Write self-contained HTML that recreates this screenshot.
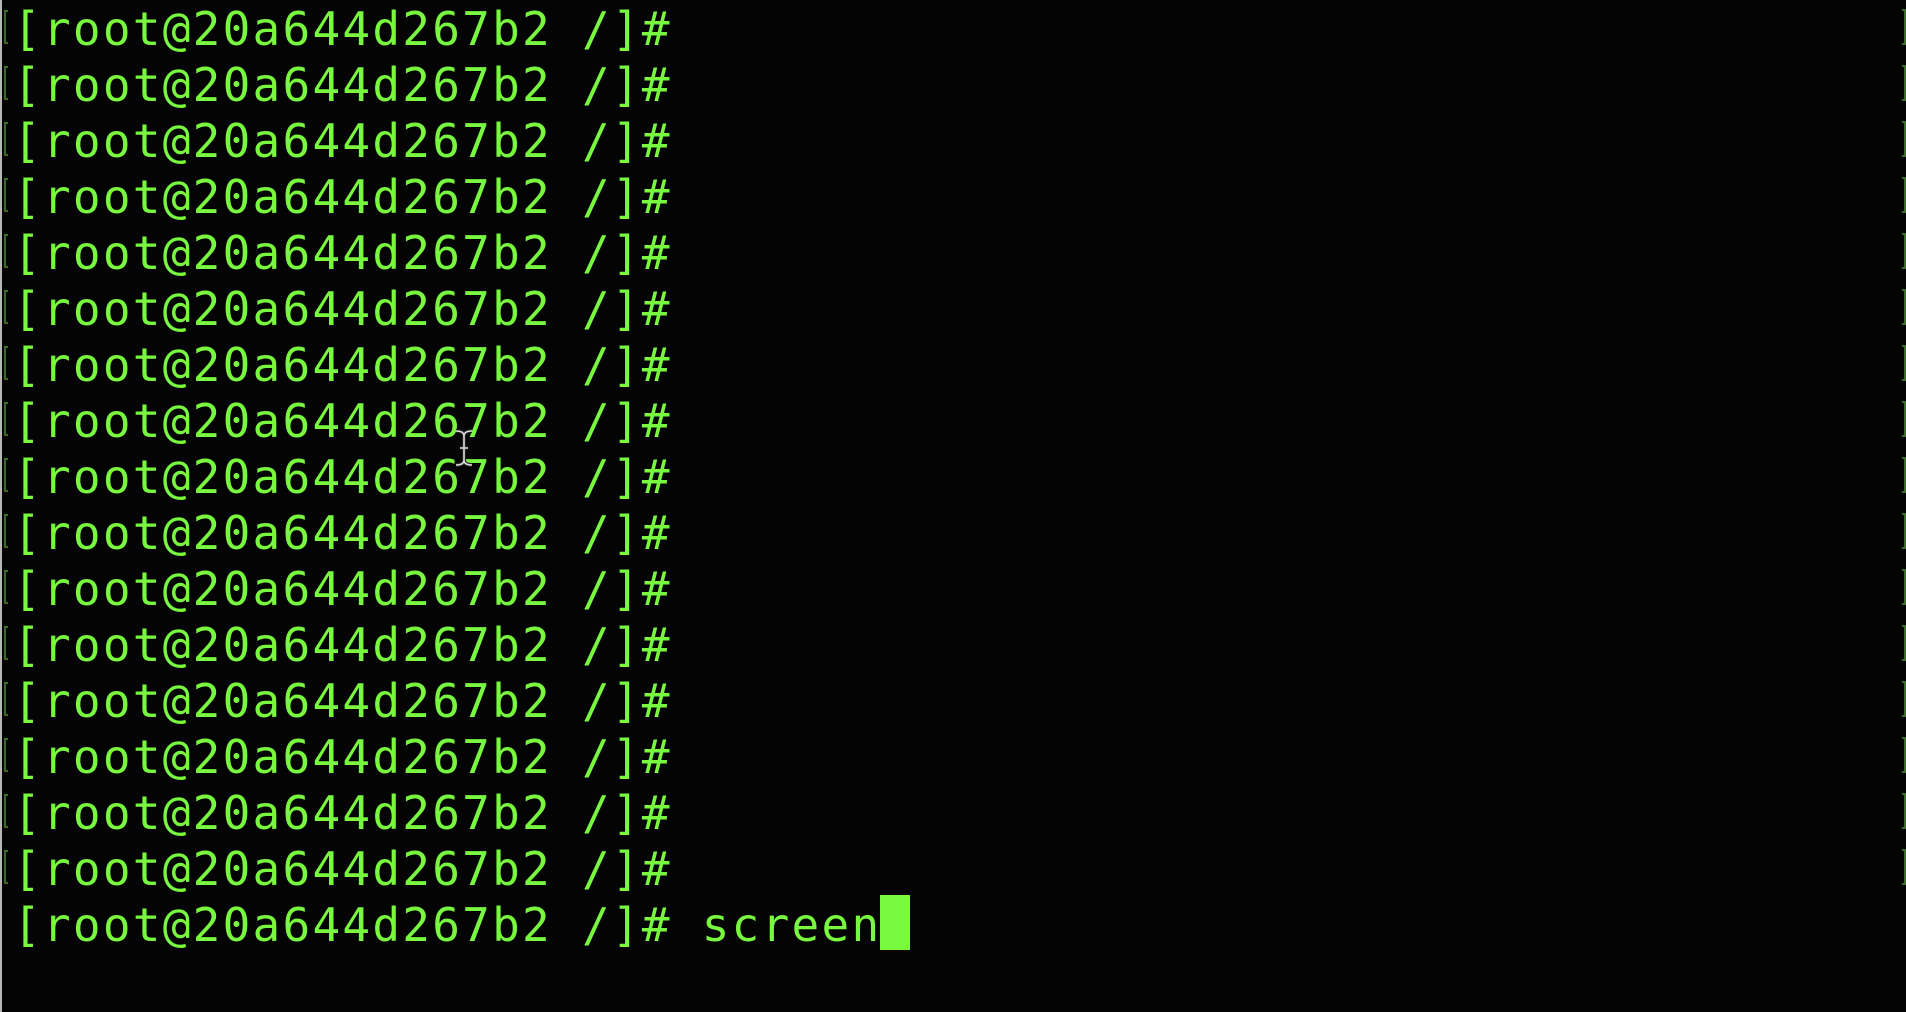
<!DOCTYPE html>
<html><head><meta charset="utf-8"><style>
html,body{margin:0;padding:0;background:#000;width:1906px;height:1012px;overflow:hidden}
body{position:relative;background:#040404}
.bl{position:absolute;left:0;top:0;width:2px;height:1012px;background:#b8b8b8}
.t{position:absolute;left:13px;top:1px;font-family:"DejaVu Sans Mono","Liberation Mono",monospace;font-size:46px;letter-spacing:2.25px;line-height:56px;color:#78f83e;white-space:pre}
.l{height:56px}
.cur{display:inline-block;width:30px;height:55px;background:#78f83e;vertical-align:top;margin-left:-1px;margin-top:-2px}
.dl{position:absolute;left:4px;width:4px;height:34px;border:2px solid #3d6b2a;border-right:none;box-sizing:border-box}
.dr{position:absolute;right:0;width:4px;height:36px;border:2px solid #3d6b2a;border-left:none;box-sizing:border-box}
</style></head><body>
<div class="bl"></div>
<div class="t"><div class="l">[root@20a644d267b2 /]#</div><div class="l">[root@20a644d267b2 /]#</div><div class="l">[root@20a644d267b2 /]#</div><div class="l">[root@20a644d267b2 /]#</div><div class="l">[root@20a644d267b2 /]#</div><div class="l">[root@20a644d267b2 /]#</div><div class="l">[root@20a644d267b2 /]#</div><div class="l">[root@20a644d267b2 /]#</div><div class="l">[root@20a644d267b2 /]#</div><div class="l">[root@20a644d267b2 /]#</div><div class="l">[root@20a644d267b2 /]#</div><div class="l">[root@20a644d267b2 /]#</div><div class="l">[root@20a644d267b2 /]#</div><div class="l">[root@20a644d267b2 /]#</div><div class="l">[root@20a644d267b2 /]#</div><div class="l">[root@20a644d267b2 /]#</div><div class="l">[root@20a644d267b2 /]# screen<span class="cur"></span></div></div>
<div class="dl" style="top:10px"></div><div class="dl" style="top:66px"></div><div class="dl" style="top:122px"></div><div class="dl" style="top:178px"></div><div class="dl" style="top:234px"></div><div class="dl" style="top:290px"></div><div class="dl" style="top:346px"></div><div class="dl" style="top:402px"></div><div class="dl" style="top:458px"></div><div class="dl" style="top:514px"></div><div class="dl" style="top:570px"></div><div class="dl" style="top:626px"></div><div class="dl" style="top:682px"></div><div class="dl" style="top:738px"></div><div class="dl" style="top:794px"></div><div class="dl" style="top:850px"></div>
<div class="dr" style="top:9px"></div><div class="dr" style="top:65px"></div><div class="dr" style="top:121px"></div><div class="dr" style="top:177px"></div><div class="dr" style="top:233px"></div><div class="dr" style="top:289px"></div><div class="dr" style="top:345px"></div><div class="dr" style="top:401px"></div><div class="dr" style="top:457px"></div><div class="dr" style="top:513px"></div><div class="dr" style="top:569px"></div><div class="dr" style="top:625px"></div><div class="dr" style="top:681px"></div><div class="dr" style="top:737px"></div><div class="dr" style="top:793px"></div><div class="dr" style="top:849px"></div>
<svg style="position:absolute;left:453px;top:428px" width="22" height="40" viewBox="0 0 22 40"><path d="M3 3 Q11 3 11 8 Q11 3 19 3 M11 8 V32 Q11 37 3 37 M11 32 Q11 37 19 37 M7 20 H15" fill="none" stroke="#222" stroke-width="4"/><path d="M3 3 Q11 3 11 8 Q11 3 19 3 M11 8 V32 Q11 37 3 37 M11 32 Q11 37 19 37 M7 20 H15" fill="none" stroke="#ddd" stroke-width="1.6"/></svg>
</body></html>
